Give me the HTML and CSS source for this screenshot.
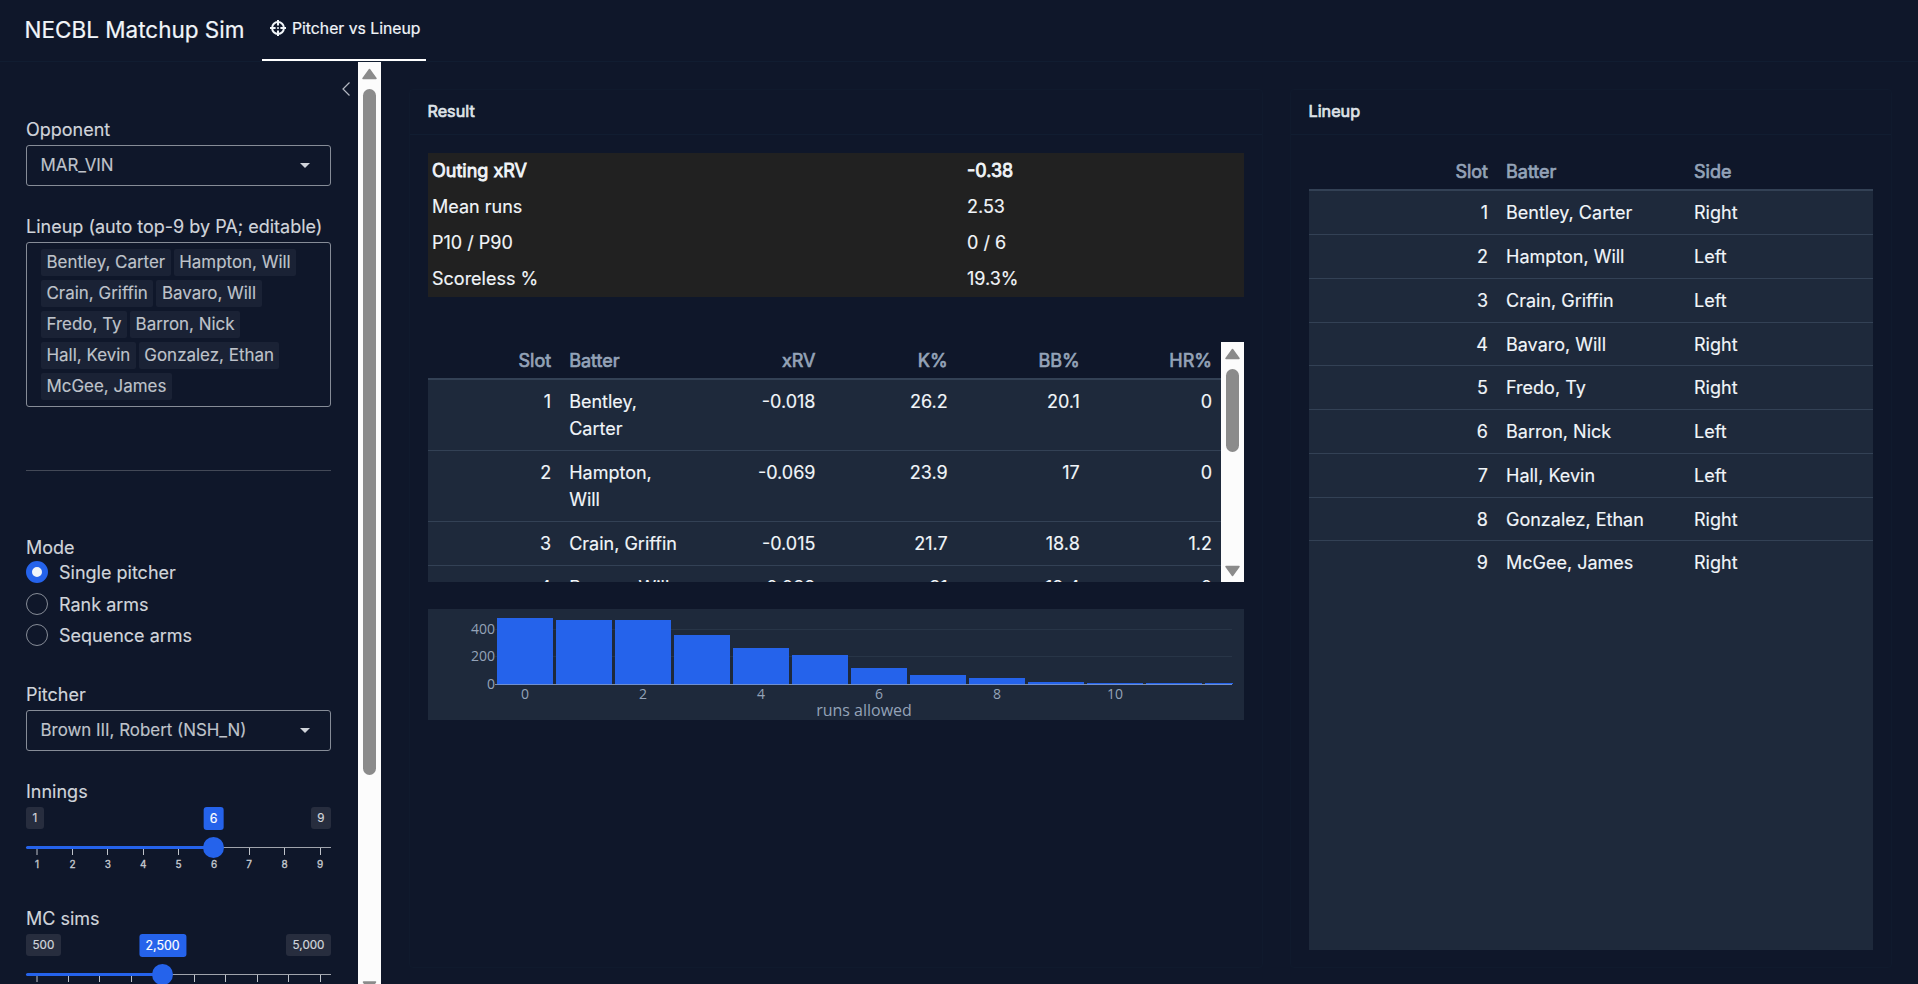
FILE: index.html
```html
<!DOCTYPE html>
<html lang="en">
<head>
<meta charset="utf-8">
<title>NECBL Matchup Sim</title>
<link rel="stylesheet" href="styles.css">
</head>
<body>
<header class="navbar">
  <span class="brand">NECBL Matchup Sim</span>
  <a class="tab">
    <svg class="tab-icon" viewBox="0 0 16 16"><circle cx="8" cy="8" r="5.9" fill="none" stroke="currentColor" stroke-width="2"/><path d="M8 0v5.6M8 10.4V16M0 8h5.6M10.4 8H16" stroke="currentColor" stroke-width="2"/><circle cx="8" cy="8" r="1" fill="currentColor"/></svg>
    <span>Pitcher vs Lineup</span>
  </a>
</header>
<div class="page">
  <aside class="sidebar">
    <svg class="collapse" viewBox="0 0 8 14"><path d="M7.500 .5L1 7l6.500 6.500" fill="none" stroke="currentColor" stroke-width="1.200"/></svg>
    <label class="label">Opponent</label>
    <div class="select"><span>MAR_VIN</span><i class="caret"></i></div>
    <label class="label label-lineup">Lineup (auto top-9 by PA; editable)</label>
    <div class="multi">
      <div class="tags"><span class="tag">Bentley, Carter</span><span class="tag">Hampton, Will</span></div>
      <div class="tags"><span class="tag">Crain, Griffin</span><span class="tag">Bavaro, Will</span></div>
      <div class="tags"><span class="tag">Fredo, Ty</span><span class="tag">Barron, Nick</span></div>
      <div class="tags"><span class="tag">Hall, Kevin</span><span class="tag">Gonzalez, Ethan</span></div>
      <div class="tags"><span class="tag">McGee, James</span></div>
    </div>
    <hr class="rule">
    <div class="label label-mode">Mode</div>
    <div class="radio"><i class="dot dot-on"></i>Single pitcher</div>
    <div class="radio"><i class="dot"></i>Rank arms</div>
    <div class="radio"><i class="dot"></i>Sequence arms</div>
    <label class="label label-pitcher">Pitcher</label>
    <div class="select"><span>Brown III, Robert (NSH_N)</span><i class="caret"></i></div>
    <label class="label label-innings">Innings</label>
    <div class="slider">
      <div class="badges"><span class="badge">1</span><span class="badge">9</span></div>
      <span class="badge badge-value" style="left:187.500px">6</span>
      <svg class="track" viewBox="0 0 305 40">
        <path class="rail" d="M0 10.500H305"/>
        <path class="tick" d="M11 12v6M46.500 12v6M81.500 12v6M117.500 12v6M152.500 12v6M223.500 11v7M258.500 11v7M294.500 11v7"/>
        <path class="fill" d="M1.500 10.500H187"/>
        <circle class="knob" cx="187.500" cy="10.500" r="10.500"/>
        <g class="ticktext"><text x="11" y="31">1</text><text x="46.500" y="31">2</text><text x="81.800" y="31">3</text><text x="117.200" y="31">4</text><text x="152.500" y="31">5</text><text x="188" y="31">6</text><text x="223.200" y="31">7</text><text x="258.600" y="31">8</text><text x="294" y="31">9</text></g>
      </svg>
    </div>
    <label class="label label-sims">MC sims</label>
    <div class="slider">
      <div class="badges"><span class="badge">500</span><span class="badge">5,000</span></div>
      <span class="badge badge-value" style="left:136.500px">2,500</span>
      <svg class="track" viewBox="0 0 305 40">
        <path class="rail" d="M0 10.500H305"/>
        <path class="tick" d="M11 12v6M42.500 12v6M73.500 12v6M105.500 12v6M168.500 11v7M199.500 11v7M231.500 11v7M262.500 11v7M294.500 11v7"/>
        <path class="fill" d="M1.500 10.500H136"/>
        <circle class="knob" cx="136.500" cy="10.500" r="10.500"/>
      </svg>
    </div>
  </aside>
  <svg class="side-scroll" viewBox="0 0 23 922"><rect width="23" height="922" fill="#fcfcfc"/><path d="M11.500 7.500L18 16.500H5z" class="arrow"/><rect x="5" y="27" width="13" height="686" rx="6.500" class="thumb"/><path d="M5.500 920h12l-6 9z" class="arrow"/></svg>
  <main class="main">
    <section class="card card-result">
      <h2 class="card-title">Result</h2>
      <div class="card-body">
        <table class="summary">
          <tr class="strong"><td>Outing xRV</td><td>-0.38</td></tr>
          <tr><td>Mean runs</td><td>2.53</td></tr>
          <tr><td>P10 / P90</td><td>0 / 6</td></tr>
          <tr><td>Scoreless %</td><td>19.3%</td></tr>
        </table>
        <div class="scrollbox">
          <table class="grid grid-result">
            <thead><tr><th class="num">Slot</th><th>Batter</th><th class="num">xRV</th><th class="num">K%</th><th class="num">BB%</th><th class="num">HR%</th></tr></thead>
            <tbody>
            <tr><td class="num">1</td><td>Bentley, Carter</td><td class="num">-0.018</td><td class="num">26.2</td><td class="num">20.1</td><td class="num">0</td></tr>
            <tr><td class="num">2</td><td>Hampton, Will</td><td class="num">-0.069</td><td class="num">23.9</td><td class="num">17</td><td class="num">0</td></tr>
            <tr><td class="num">3</td><td>Crain, Griffin</td><td class="num">-0.015</td><td class="num">21.7</td><td class="num">18.8</td><td class="num">1.2</td></tr>
            <tr><td class="num">4</td><td>Bavaro, Will</td><td class="num">-0.039</td><td class="num">21</td><td class="num">19.4</td><td class="num">0</td></tr>
            </tbody>
          </table>
          <svg class="box-scroll" viewBox="0 0 23 240"><rect width="23" height="240" fill="#fcfcfc"/><path d="M11.500 7.500L18 16.500H5z" class="arrow"/><rect x="5" y="27" width="13" height="83" rx="6.500" class="thumb"/><path d="M5 224.500h13l-6.500 9z" class="arrow"/></svg>
        </div>
        <svg class="chart" viewBox="0 0 816 111">
          <path d="M67 20.500H804M67 47.500H804" stroke="#283547"/>
          <g fill="#2563eb">
            <rect x="69" y="9" width="56" height="66"/><rect x="128" y="11" width="56" height="64"/><rect x="187" y="11" width="56" height="64"/><rect x="246" y="26" width="56" height="49"/><rect x="305" y="39" width="56" height="36"/><rect x="364" y="46" width="56" height="29"/><rect x="423" y="59" width="56" height="16"/><rect x="482" y="66" width="56" height="9"/><rect x="541" y="69" width="56" height="6"/><rect x="600" y="73" width="56" height="2"/><rect x="659" y="74" width="56" height="1"/><rect x="718" y="74" width="56" height="1"/><rect x="777" y="74" width="28" height="1"/>
          </g>
          <path d="M67 75.500H804" stroke="#94a3b8" stroke-opacity=".85"/>
          <path d="M69 75.500h56m3 0h56m3 0h56m3 0h56m3 0h56m3 0h56m3 0h56m3 0h56m3 0h56m3 0h56m3 0h56m3 0h56m3 0h27" stroke="#6f8fd0"/>
          <g class="axis axis-y"><text x="67" y="25">400</text><text x="67" y="52">200</text><text x="67" y="79.500">0</text></g>
          <g class="axis axis-x"><text x="97" y="90">0</text><text x="215" y="90">2</text><text x="333" y="90">4</text><text x="451" y="90">6</text><text x="569" y="90">8</text><text x="687" y="90">10</text></g>
          <text class="axis-title" x="436" y="106.500">runs allowed</text>
        </svg>
      </div>
    </section>
    <section class="card card-lineup">
      <h2 class="card-title">Lineup</h2>
      <div class="card-body">
        <div class="lineup-wrap">
        <table class="grid grid-lineup">
          <thead><tr><th class="num">Slot</th><th>Batter</th><th>Side</th></tr></thead>
          <tbody>
          <tr><td class="num">1</td><td>Bentley, Carter</td><td>Right</td></tr>
          <tr><td class="num">2</td><td>Hampton, Will</td><td>Left</td></tr>
          <tr><td class="num">3</td><td>Crain, Griffin</td><td>Left</td></tr>
          <tr><td class="num">4</td><td>Bavaro, Will</td><td>Right</td></tr>
          <tr><td class="num">5</td><td>Fredo, Ty</td><td>Right</td></tr>
          <tr><td class="num">6</td><td>Barron, Nick</td><td>Left</td></tr>
          <tr><td class="num">7</td><td>Hall, Kevin</td><td>Left</td></tr>
          <tr><td class="num">8</td><td>Gonzalez, Ethan</td><td>Right</td></tr>
          <tr><td class="num">9</td><td>McGee, James</td><td>Right</td></tr>
          </tbody>
        </table>
        <div class="lineup-rest"></div>
        </div>
      </div>
    </section>
  </main>
</div>
</body>
</html>
```
FILE: styles.css
```css
* { box-sizing: border-box; }
body { margin: 0; height: 984px; overflow: hidden; display: flex; flex-direction: column; background: #0f172a; color: #f1f5f9; font: 18px/27px Inter, "Liberation Sans", sans-serif; }
.navbar { height: 62px; flex: none; display: flex; padding-left: 24.500px; border-bottom: 1px solid #111d31; }
.brand { width: 237.500px; font-size: 22.500px; line-height: 60px; white-space: nowrap; -webkit-text-stroke: .2px; }
.tab { width: 164px; height: 61px; display: flex; padding: 14px 0 0 8px; gap: 6px; border-bottom: 2px solid #fff; font-size: 15.750px; line-height: 29px; white-space: nowrap; -webkit-text-stroke: .2px; }
.tab-icon { width: 16px; height: 16px; margin-top: 6px; flex: none; }
.page { flex: 1; min-height: 0; display: flex; overflow: hidden; }
.sidebar { width: 358px; flex: none; padding: 20px 27px 0 26px; display: flex; flex-direction: column; color: #d0d4da; -webkit-text-stroke: .15px; }
.sidebar > * { flex: none; }
.collapse { width: 8px; height: 14px; align-self: flex-end; margin-right: -19px; margin-bottom: 20px; color: #b4b9c2; }
.label { display: block; height: 27px; margin-bottom: 2px; white-space: nowrap; }
.select { height: 41px; border: 1px solid #868c97; border-radius: 3px; padding: 0 20px 0 13.500px; display: flex; align-items: center; justify-content: space-between; font-size: 16.900px; color: #bfc3ca; }
.caret { border: 5px solid transparent; border-top-color: #d0d4da; border-bottom: 0; }
.label-lineup { margin-top: 27px; margin-bottom: 2px; }
.multi { height: 165px; border: 1px solid #868c97; border-radius: 3px; padding: 6px 14px; display: flex; flex-direction: column; gap: 4px; }
.tags { display: flex; gap: 3px; }
.tag { height: 27px; padding: 0 5.500px; background: #1a2235; border-radius: 2px; font-size: 16.950px; line-height: 26px; color: #bfc3ca; white-space: nowrap; }
.rule { width: 305px; height: 1px; margin: 63px 0 0; border: 0; background: #434957; }
.label-mode { margin-top: 63px; margin-bottom: 0; }
.radio { height: 31.500px; display: flex; gap: 11px; line-height: 23px; }
.dot { width: 22px; height: 22px; border: 1px solid #868c97; border-radius: 50%; margin-top: 0; }
.dot-on { border: 6px solid #2563eb; background: #f1f5f9; }
.label-pitcher { margin-top: 25.500px; }
.label-innings { margin-top: 27px; }
.label-sims { margin-top: 24px; }
.slider { position: relative; height: 74px; }
.badges { display: flex; justify-content: space-between; }
.badge { height: 22px; padding: 0 6.500px; border-radius: 3px; background: #272d3e; font-size: 11.700px; line-height: 22px; -webkit-text-stroke: .2px; }
.badge-value { position: absolute; top: 0; transform: translateX(-50%); height: 23px; line-height: 23px; background: #2563eb; color: #fff; font-size: 12.400px; }
.track { display: block; width: 305px; height: 40px; margin-top: 8px; overflow: visible; }
.rail { stroke: #a0a4ac; }
.tick { stroke: #bfc3ca; }
.fill { stroke: #2563eb; stroke-width: 3; stroke-linecap: round; }
.knob { fill: #2563eb; }
.ticktext { font-size: 10px; text-anchor: middle; fill: #c8ccd2; stroke: #c8ccd2; stroke-width: .3px; }
.side-scroll { width: 23px; height: 922px; flex: none; }
.arrow { fill: #8b8b8b; stroke: #8b8b8b; stroke-width: 1.500px; stroke-linejoin: round; }
.thumb { fill: #8b8b8b; }
.main { flex: 1; display: flex; gap: 27px; padding: 27px 28px 16px; min-width: 0; }
.card { border: 1px solid #101a2d; border-radius: 4px; flex: none; }
.card-result { width: 854px; }
.card-lineup { width: 602px; }
.card-title { margin: 0; height: 45px; padding: 8px 17.500px; font-size: 16.200px; font-weight: 400; line-height: 27px; border-bottom: 1px solid #111d31; -webkit-text-stroke: .7px; color: #dfe3e8; }
.card-body { padding: 18px 18px 0; display: flex; flex-direction: column; }
.summary { width: 816px; border-collapse: collapse; background: #212121; table-layout: fixed; -webkit-text-stroke: .15px; }
.summary td { height: 36px; padding: 0 4px 2px; line-height: 27px; }
.summary td:first-child { width: 535px; }
.strong { -webkit-text-stroke: .8px; }
.scrollbox { display: flex; height: 240px; margin-top: 45px; overflow: hidden; }
.box-scroll { width: 23px; height: 240px; flex: none; }
.grid { border-collapse: separate; border-spacing: 0; table-layout: fixed; }
.grid th { height: 38px; padding: 0 9px; text-align: left; font-weight: 400; color: #94a3b8; border-bottom: 2px solid #334155; -webkit-text-stroke: .7px; }
.grid td { padding: 8px 9px; vertical-align: top; background: #1e293b; border-bottom: 1px solid #334155; -webkit-text-stroke: .15px; }
.grid .num { text-align: right; }
.grid-result { width: 793px; height: max-content; flex: none; }
.lineup-wrap { display: flex; flex-direction: column; height: 797px; }
.grid-lineup { width: 564px; }
.grid-lineup tr:nth-child(4n) td { padding-bottom: 7px; }
.grid-lineup tr:last-child td { border-bottom-color: #1e293b; }
.lineup-rest { flex: 1; width: 564px; background: #1e293b; }
.chart { width: 816px; height: 111px; margin-top: 27px; background: #1e293b; }
.axis { font: 14px "Open Sans", sans-serif; fill: #94a3b8; }
.axis-y { text-anchor: end; }
.axis-x { text-anchor: middle; }
.axis-title { font: 16px "Open Sans", sans-serif; fill: #94a3b8; text-anchor: middle; }
```
